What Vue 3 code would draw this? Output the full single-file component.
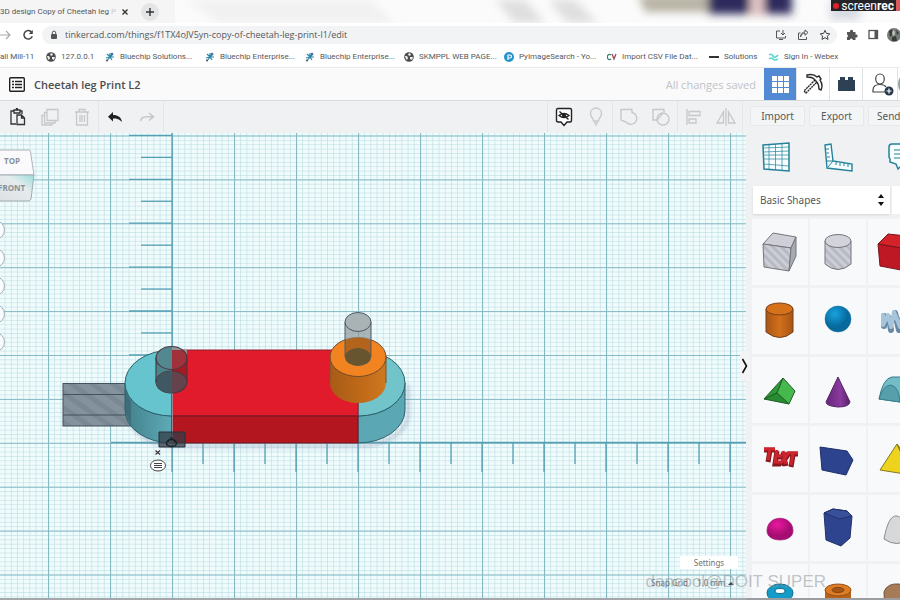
<script setup>
import { ref } from 'vue'

const address = ref('tinkercad.com/things/f1TX4oJV5yn-copy-of-cheetah-leg-print-l1/edit')

const bookmarks = [
  { label: '127.0.0.1', icon: 'globe', w: 32 },
  { label: 'Bluechip Solutions...', icon: 'chip', w: 73 },
  { label: 'Bluechip Enterprise...', icon: 'chip', w: 73 },
  { label: 'Bluechip Enterprise...', icon: 'chip', w: 72 },
  { label: 'SKMPPL WEB PAGE...', icon: 'globe', w: 73 },
  { label: 'PyImageSearch - Yo...', icon: 'py', w: 76 },
  { label: 'Import CSV File Dat...', icon: 'cv', w: 75 },
  { label: 'Solutions', icon: 'dash', w: 33 },
  { label: 'Sign In - Webex', icon: 'webex', w: 60 },
]

const shapes = [
  'holebox', 'holecyl', 'box', 'cylinder', 'sphere', 'scribble', 'roof', 'cone', 'round',
  'text', 'wedge', 'pyramid', 'half', 'prism', 'paraboloid', 'torus', 'tube', 'heart',
]

const views = ['Home view', 'Fit all', 'Zoom in', 'Zoom out', 'Flat view']

const vTicks = Array.from({ length: 15 }, (_, i) => ({ y: 442.7 - i * 21.95, x: i % 2 ? 141 : 129 }))
const hTicks = Array.from({ length: 19 }, (_, i) => ({ x: 172 + i * 31, y: i % 2 ? 331 : 339 }))
</script>

<template>
  <div class="app">
    <header class="browser">
      <div class="tabs">
        <svg class="backdrop" width="900" height="23" aria-hidden="true">
          <defs><filter id="soft"><feGaussianBlur stdDeviation="4" /></filter></defs>
          <rect width="900" height="23" fill="#fbfbfb" />
          <rect width="175" height="23" fill="#f5f5f5" />
          <g filter="url(#soft)">
            <path d="M185 0H370L395 23H220Z" fill="#f1f1f1" />
            <path d="M495 0H525L545 23H515Z M548 0H575L598 23H568Z" fill="#dfdfdf" />
            <path d="M638 -5H715V12H645Z" fill="#b8b3a4" />
            <path d="M708 -10H792V14H708Z" fill="#2e2b5d" />
            <path d="M750 -10H764V16H750Z" fill="#e2c6c6" />
            <path d="M830 0H860V20H830Z" fill="#d5dae2" />
          </g>
        </svg>
        <span class="tab-title">3D design Copy of Cheetah leg <i>P</i></span>
        <button class="plain close" aria-label="Close tab">
          <svg width="8" height="8"><path d="M1.5 1.5 6.5 6.5M6.5 1.5 1.5 6.5" stroke="#333" stroke-width="1.4" /></svg>
        </button>
        <button class="plain add" aria-label="New tab">
          <svg width="10" height="10"><path d="M5 1V9M1 5H9" stroke="#333" stroke-width="1.4" /></svg>
        </button>
        <div class="recorder"><span class="dot"></span><span>screen<b>rec</b></span><span class="bar"></span></div>
      </div>

      <div class="nav">
        <button class="plain" aria-label="Forward">
          <svg width="12" height="12"><path d="M0 6H10M6 2 10 6 6 10" fill="none" stroke="#aaa" stroke-width="1.2" /></svg>
        </button>
        <button class="plain reload" aria-label="Reload">
          <svg width="12" height="12"><path d="M9.7 3.2A4.3 4.3 0 1 0 10.3 7.3" fill="none" stroke="#444" stroke-width="1.5" /><path d="M10.8 1V5H6.8Z" fill="#444" /></svg>
        </button>
        <div class="omnibox">
          <svg width="8" height="10"><rect x="1" y="4" width="6" height="5" rx="1" fill="#555" /><path d="M2.3 4V2.8a1.7 1.7 0 0 1 3.4 0V4" fill="none" stroke="#555" /></svg>
          <input v-model="address" aria-label="Address" />
          <button class="plain" aria-label="Install app">
            <svg width="12" height="12" fill="none" stroke="#555"><path d="M5 2H1.5V9H10.5V7M4 10.5H8M8 1V6M6 4 8 6 10 4" /></svg>
          </button>
          <button class="plain" aria-label="Share">
            <svg width="12" height="12" fill="none" stroke="#555"><path d="M3.5 4H1.5V10.5H9.5V8M3.5 8C4 5 6 4.2 8 4.2V6.3L11 3.5 8 1V3C5.5 3.2 4 4.5 3.5 8Z" /></svg>
          </button>
          <button class="plain" aria-label="Bookmark">
            <svg width="12" height="12"><path d="M6 1.3 7.4 4.4 10.8 4.8 8.3 7.1 9 10.4 6 8.7 3 10.4 3.7 7.1 1.2 4.8 4.6 4.4Z" fill="none" stroke="#444" /></svg>
          </button>
        </div>
        <button class="plain ext" aria-label="Extensions">
          <svg width="12" height="12"><path d="M1 3H4A1.6 1.6 0 1 1 7 3H9.5V5.5A1.6 1.6 0 1 1 9.5 8.5V11H6.8A1.5 1.5 0 0 0 3.8 11H1V8.3A1.5 1.5 0 0 0 1 5.5Z" fill="#555" /></svg>
        </button>
        <button class="plain side" aria-label="Side panel">
          <svg width="11" height="11"><rect x="1" y="1.5" width="8.500" height="8" fill="none" stroke="#555" stroke-width="1.3" /><rect x="6.500" y="1.500" width="3" height="8" fill="#555" /></svg>
        </button>
        <button class="plain avatar" aria-label="Profile">
          <svg width="14" height="14"><circle cx="7" cy="7" r="7" fill="#777b76" /><path d="M2 3 5 1 6 6 3 9ZM9 2 12 5 10 7ZM5 9 9 8 10 13H5Z" fill="#363c39" /><path d="M6 2 8 4 7 8 5 6Z" fill="#c6c9be" /></svg>
        </button>
      </div>

      <nav class="bookmarks" aria-label="Bookmarks">
        <a href="#" class="first">all Mill-11</a>
        <a v-for="(b, i) in bookmarks" :key="i" href="#">
          <svg v-if="b.icon === 'globe'" width="10" height="10"><circle cx="5" cy="5" r="4.800" fill="#4c4c4c" /><path d="M1 4 3 4 4 6 3 8 2 7ZM5 1 7 2 6 4 4 3ZM6 5 9 5 8 8 6 7Z" fill="#eee" /></svg>
          <svg v-else-if="b.icon === 'chip'" width="10" height="10"><path d="M5 5 2 2M5 5 8 2M5 5 9 5M5 5 7 8M5 5 2 9M5 5 1 6M5 5 5 1" stroke="#2a86a5" stroke-width="1.200" /><circle cx="7" cy="2" r="1.300" fill="#496cb5" /><circle cx="2" cy="8.500" r="1" fill="#555" /></svg>
          <svg v-else-if="b.icon === 'py'" width="10" height="10"><circle cx="5" cy="5" r="5" fill="#2493c9" /><path d="M4 8V3H6A1.500 1.500 0 0 1 6 6H4" fill="none" stroke="#fff" stroke-width="1.200" /></svg>
          <svg v-else-if="b.icon === 'cv'" width="10" height="10"><path d="M4 3A2.200 2.600 0 1 0 4 7" fill="none" stroke="#39806b" stroke-width="1.300" /><path d="M5 2 7 7 9 2" fill="none" stroke="#a44358" stroke-width="1.300" /></svg>
          <svg v-else-if="b.icon === 'dash'" width="10" height="10"><path d="M0 5H10M1 4V6M5 4V6" stroke="#333" stroke-width="1.800" /></svg>
          <svg v-else width="10" height="10"><path d="M0 3Q2 1 4 4T9 3M0 7Q2 5 4 7T9 7" fill="none" stroke="#54d7cf" stroke-width="1.600" /></svg>
          <span :style="{ width: b.w + 'px' }">{{ b.label }}</span>
        </a>
      </nav>
    </header>

    <div class="titlebar">
      <button class="plain menu" aria-label="Designs">
        <svg width="16" height="15"><rect x=".7" y=".7" width="14.600" height="13.600" rx="1" fill="#fff" stroke="#222" stroke-width="1.400" /><path d="M3 4.500H5M3 7.500H5M3 10.500H5M6 4.500H13M6 7.500H13M6 10.500H13" stroke="#222" stroke-width="1.500" /></svg>
      </button>
      <h1>Cheetah leg Print L2</h1>
      <span class="saved">All changes saved</span>
      <div class="modes">
        <button class="on" aria-label="3D design"><svg width="18" height="18"><path d="M1 1H6V6H1ZM7 1H12V6H7ZM13 1H18V6H13ZM1 7H6V12H1ZM7 7H12V12H7ZM13 7H18V12H13ZM1 13H6V18H1ZM7 13H12V18H7ZM13 13H18V18H13Z" fill="#fff" /></svg></button>
        <button aria-label="Blocks"><svg width="22" height="22" fill="none" stroke="#2b2b2b" stroke-width="1.400"><path d="M13 7 2 18 4 20 15 9" stroke-dasharray="2 .6" /><path d="M5 2C9 1 13 2 15 4L17 3 19 6 18 7C20 10 21 13 19 17L17 16C17 12 16 10 14 8L12 6C10 4 8 4 5 4Z" /></svg></button>
        <button aria-label="Bricks"><svg width="19" height="16"><path d="M1 4H3V1H8V4H11V1H16V4H18V15H1Z" fill="#2d4054" /></svg></button>
        <button class="person" aria-label="Invite people"><svg width="23" height="24" fill="none" stroke="#444" stroke-width="1.200"><ellipse cx="9" cy="7" rx="4.300" ry="5" /><path d="M14 20H2V18C2 14 5 12.500 9 12.500 12 12.500 14 13.500 15 15" /><circle cx="18" cy="19" r="4.500" fill="#26394c" stroke="none" /><path d="M18 16.500V21.500M15.500 19H20.500" stroke="#fff" /></svg></button>
        <button class="user" aria-label="Account"><span></span></button>
      </div>
    </div>

    <div class="body">
      <main>
        <div class="toolbar">
          <div class="group">
            <button class="tool" aria-label="Paste"><svg width="18" height="18" fill="none" stroke="#333" stroke-width="1.300"><path d="M7 16H2V3H5M11 3H13V6M5 2H11V5H5ZM7.500 2V.7H9" /><path d="M8 7H12.500L15.500 10V16.500H8ZM12.500 7V10H15.500" fill="#f0f1f3" /></svg></button>
            <button class="tool off" aria-label="Duplicate"><svg width="18" height="18" fill="none" stroke="#c6c8cb" stroke-width="1.300"><path d="M6 1.500H17V12.500H6ZM6 4.500H3.500V15H14V12.500M3.500 7.500H1V17H11V15" /></svg></button>
            <button class="tool off" aria-label="Delete"><svg width="18" height="18" fill="none" stroke="#c6c8cb" stroke-width="1.300"><path d="M2 4H16M6 4V1.500H12V4M3.500 4.500V17H14.500V4.500M7 7V14M9 7V14M11.500 7V14" /></svg></button>
          </div>
          <div class="group">
            <button class="tool" aria-label="Undo"><svg width="16" height="12"><path d="M6 1V4C11 4 14 6 15 11 12 8 10 7.500 6 7.500V10.500L1 5.700Z" fill="#222" /></svg></button>
            <button class="tool off" aria-label="Redo"><svg width="16" height="12"><path d="M10 2 14.500 5.700 10 9.500M14 5.700H8C4 5.700 2 7 1.500 10" fill="none" stroke="#c6c8cb" stroke-width="1.600" /></svg></button>
          </div>
          <div class="group right">
            <button class="tool" aria-label="Show all"><svg width="18" height="20" fill="none" stroke="#222" stroke-width="1.400"><path d="M3 1.500H15Q16.500 1.500 16.500 3V13.500Q16.500 15 15 15H12L9 18.500 6 15H3Q1.500 15 1.500 13.500V3Q1.500 1.500 3 1.500Z" fill="#fff" /><path d="M4 8.500Q9 4.500 14 8.500 9 12.500 4 8.500Z" /><circle cx="9" cy="8.500" r="1.400" fill="#222" /><path d="M4.500 4.500 13.500 12.500" /></svg></button>
            <button class="tool off" aria-label="Light"><svg width="18" height="20" fill="none" stroke="#c6c8cb" stroke-width="1.300"><path d="M6.500 14C6.500 11 3.500 10 3.500 6.500A5.500 5.500 0 0 1 14.500 6.500C14.500 10 11.500 11 11.500 14ZM7 16H11M8 18H10" /></svg></button>
          </div>
          <div class="group">
            <button class="tool off" aria-label="Group"><svg width="20" height="18" fill="none" stroke="#c6c8cb" stroke-width="1.400"><path d="M2 1.500H13V4.500A6 6 0 1 1 7 14L2 12Z" /></svg></button>
            <button class="tool off" aria-label="Ungroup"><svg width="20" height="18" fill="none" stroke="#c6c8cb" stroke-width="1.400"><path d="M6 12H2V1.500H13V4" /><circle cx="12" cy="11" r="6" /><path d="M6 12 12 5" /></svg></button>
          </div>
          <div class="group">
            <button class="tool off" aria-label="Align"><svg width="18" height="18" fill="none" stroke="#c6c8cb" stroke-width="1.300"><path d="M2 1V17M4 3.500H15V7.500H4ZM4 11H11V15H4Z" /></svg></button>
            <button class="tool off" aria-label="Mirror"><svg width="20" height="18" fill="none" stroke="#c6c8cb" stroke-width="1.300"><path d="M10 0V18M7.500 4V15H1ZM12.500 4V15H19Z" /></svg></button>
          </div>
        </div>

        <div class="stage">
          <svg class="scene" role="img" aria-label="Cheetah leg model on the workplane">
            <defs>
              <pattern id="minor" x="48" y="2.500" width="6.200" height="4.390" patternUnits="userSpaceOnUse">
                <path d="M0 0H6.200M0 0V4.390" fill="none" stroke="#b0d6df" stroke-width="1" />
              </pattern>
              <pattern id="major" x="48" y="2.500" width="62" height="43.900" patternUnits="userSpaceOnUse">
                <path d="M.5 0V43.900M0 .5H62" fill="none" stroke="#86b9c4" stroke-width="1.200" />
              </pattern>
              <pattern id="stripe" width="12" height="12" patternUnits="userSpaceOnUse" patternTransform="rotate(-55)">
                <rect width="12" height="12" fill="#84929d" /><rect width="5" height="12" fill="#7a8894" />
              </pattern>
              <linearGradient id="tealSide"><stop stop-color="#42808c" /><stop offset="1" stop-color="#5eabb7" /></linearGradient>
              <linearGradient id="orangeSide"><stop stop-color="#a85b17" /><stop offset=".5" stop-color="#bd6818" /><stop offset="1" stop-color="#d07820" /></linearGradient>
              <filter id="shade"><feGaussianBlur stdDeviation="2" /></filter>
            </defs>
            <rect width="100%" height="100%" fill="#f0fbfc" />
            <rect width="100%" height="100%" fill="url(#minor)" />
            <rect width="100%" height="100%" fill="url(#major)" />
            <g stroke="#55a0b5" stroke-width="1.300">
              <path d="M172 0V309M111 309.500H3000" />
              <path v-for="(t, i) in vTicks" :key="'v' + i" :d="`M${t.x} ${t.y - 133}H172`" />
              <path v-for="(t, i) in hTicks" :key="'h' + i" :d="`M${t.x} 309V${t.y}`" />
            </g>
            <g transform="translate(0 -133)">
              <path d="M130 420A47 33 0 0 0 172 446H360A48 33 0 0 0 408 410V385" fill="none" stroke="#7d91af" stroke-width="3" opacity=".5" filter="url(#shade)" />
              <g stroke="#43515c">
                <rect x="63" y="383.500" width="68" height="42.500" fill="url(#stripe)" />
                <path d="M63 394.500H130M63 415H130" />
              </g>
              <path d="M125 383A47 33 0 0 0 172 416V443A47 33 0 0 1 125 410Z" fill="url(#tealSide)" stroke="#2c626d" />
              <path d="M172 350A47 33 0 0 0 172 416Z" fill="#66c4cf" stroke="#2c626d" />
              <path d="M125 410V388A47 33 0 0 0 131 401V426Z" fill="#395f6d" opacity=".6" />
              <path d="M405 383A47 33 0 0 1 358 416V443A47 33 0 0 0 405 410Z" fill="#5ba8b4" stroke="#2c626d" />
              <path d="M358 350A47 33 0 0 1 358 416Z" fill="#72c4cb" stroke="#2c626d" />
              <path d="M172 350H358V416H172Z" fill="#e21b2c" stroke="#8e2030" />
              <path d="M172 416H358V443H172Z" fill="#b3161f" stroke="#701722" />
              <path d="M172.500 350V443" stroke="#a38390" />
              <g stroke="#4c3842" stroke-width="1.200">
                <path d="M156 358A15.500 11.500 0 0 1 172 346.500V393.500A15.500 11.500 0 0 1 156 382Z" fill="#4a858e" stroke="none" />
                <path d="M172 350H187V382A15.500 11.500 0 0 1 172 393Z" fill="#aa1922" stroke="none" />
                <path d="M172 346.500A15.500 11.500 0 0 1 187 355V350H172Z" fill="#90969d" stroke="none" />
                <ellipse cx="171.500" cy="382" rx="15.500" ry="11" fill="#65434c" />
                <path d="M156 382A15.500 11 0 0 1 172 371V393A15.500 11 0 0 1 156 382" fill="#405861" stroke="none" />
                <path d="M156 358V382M187 358V382" />
                <ellipse cx="171.500" cy="358" rx="15.500" ry="11.500" fill="#7c98a2" fill-opacity=".2" />
              </g>
              <path d="M330 357V383A28 20 0 0 0 386 383V357Z" fill="url(#orangeSide)" />
              <path d="M386 357V383M330 357V381" stroke="#79542e" />
              <ellipse cx="358" cy="357" rx="28" ry="19.500" fill="#f18420" stroke="#714c2c" />
              <path d="M345 322V357A13 9 0 0 0 371 357V322Z" fill="#8f989b" fill-opacity=".7" />
              <path d="M345 340Q358 335 371 340V357H345Z" fill="#b2641c" />
              <ellipse cx="358" cy="357" rx="13" ry="9" fill="#675530" />
              <path d="M345 322V357M371 322V357" stroke="#4f5b64" />
              <ellipse cx="358" cy="322" rx="13" ry="9.500" fill="#a9b2b5" stroke="#4d5962" />
              <path d="M159 432H185V447H159Z" fill="#343c45" fill-opacity=".75" stroke="#27333a" />
              <ellipse cx="171.500" cy="443" rx="5" ry="3.500" fill="none" stroke="#182228" stroke-width="1.500" />
              <path d="M168 442 171.500 437 175 442" fill="none" stroke="#182228" />
              <path d="M155.500 450.500 160 454.500M160 450.500 155.500 454.500" stroke="#333" stroke-width="1.200" />
              <ellipse cx="158" cy="465.500" rx="7.500" ry="5.500" fill="#fff" stroke="#444" />
              <path d="M154 463.500H162M154 465.500H162M154 467.500H162" stroke="#444" />
            </g>
          </svg>

          <svg class="cube" width="36" height="56" role="img" aria-label="View cube: top, front">
            <defs><linearGradient id="face" x1="0" x2="1" y1="1" y2="0"><stop stop-color="#dcdfe1" /><stop offset=".6" stop-color="#e6eced" /><stop offset="1" stop-color="#9bdcdd" /></linearGradient></defs>
            <path d="M-1 2H29Q30 2 30.500 4L34 27H-1Z" fill="#fafafc" stroke="#afb4b9" />
            <path d="M-1 27H34L31 51Q30 53 28 53H-1Z" fill="url(#face)" stroke="#a1adb3" />
            <text x="4" y="16" font-size="8" font-weight="700">TOP</text>
            <text x="-2" y="43" font-size="8" font-weight="700">FRONT</text>
          </svg>

          <div class="views">
            <button v-for="v in views" :key="v" :aria-label="v"></button>
          </div>
          <div class="snap">
            <button class="settings">Settings</button>
            <label>Snap Grid
              <select><option>1.0 mm</option></select>
              <svg width="6" height="5"><path d="M0 4 3 1 6 4Z" fill="#444" /></svg>
            </label>
          </div>
        </div>
      </main>

      <button class="fold" aria-label="Collapse panel"><svg width="8" height="16"><path d="M1.500 1 5.500 8 1.500 15" fill="none" stroke="#111" stroke-width="1.600" /></svg></button>

      <aside>
        <div class="actions"><button>Import</button><button>Export</button><button>Send To</button></div>
        <div class="helpers">
          <button class="plain" aria-label="Workplane"><svg width="28" height="30" fill="none" stroke="#258199"><path d="M1 3 27 1V29L2 27Z" stroke-width="1.500" fill="#f5fdff" /><path d="M1 10 27 9M1 17 27 17M2 22 27 24M7 2V27M13.500 2V28M20 1V28M1 6 27 5M1 13 27 13" stroke-opacity=".7" /></svg></button>
          <button class="plain" aria-label="Ruler"><svg width="30" height="30" fill="none" stroke="#258199" stroke-width="1.400"><path d="M2 3 8 2 10 19 29 22V29L4 26Z" fill="#f5fdff" /><path d="M3 7H6M3.500 11H6M4 15H7M4 19H10L5 25M13 20V23M17 21V24M21 21V24M25 22V25" stroke-width="1" /></svg></button>
          <button class="plain" aria-label="Notes"><svg width="26" height="30" fill="none" stroke="#258199" stroke-width="1.500"><path d="M5 2H25V23H15L11 27 9 22 3 20V17L2 15V5Q2 2 5 2Z" fill="#f5fdff" /><path d="M7 8H25M7 12H25M7 16H25" stroke-width="1.200" /></svg></button>
        </div>
        <div class="picker">
          <select aria-label="Shape library"><option>Basic Shapes</option></select>
          <svg width="8" height="12"><path d="M1 4 4 0 7 4ZM1 8H7L4 12Z" fill="#111" /></svg>
          <button aria-label="Search shapes"></button>
        </div>
        <div class="grid">
          <button v-for="s in shapes" :key="s" class="card" :aria-label="s">
            <svg width="44" height="44" viewBox="0 0 44 44">
              <defs>
                <pattern id="hole" width="6" height="6" patternUnits="userSpaceOnUse" patternTransform="rotate(-45)"><rect width="6" height="6" fill="#b7bac3" /><rect width="3" height="6" fill="#cccdd6" /></pattern>
                <radialGradient id="blue" cx=".38" cy=".3"><stop stop-color="#18a2df" /><stop offset="1" stop-color="#07699c" /></radialGradient>
                <radialGradient id="pink" cx=".4" cy=".3"><stop stop-color="#eb179f" /><stop offset="1" stop-color="#a60d72" /></radialGradient>
                <linearGradient id="violet"><stop stop-color="#65277a" /><stop offset=".6" stop-color="#893a9e" /><stop offset="1" stop-color="#592169" /></linearGradient>
                <linearGradient id="amber"><stop stop-color="#a85516" /><stop offset=".5" stop-color="#d2701b" /><stop offset="1" stop-color="#a85516" /></linearGradient>
              </defs>
              <g v-if="s === 'holebox'" stroke="#74767d" stroke-linejoin="round"><path d="M5 14 15 3 38 7 33 18Z" fill="#cfd0d7" /><path d="M5 14 33 18 31 41 6 37Z" fill="url(#hole)" /><path d="M33 18 38 7 38 26 31 41Z" fill="#a7aab3" /></g>
              <g v-else-if="s === 'holecyl'" stroke="#74767d"><path d="M9 11V34Q22 45 35 34V11Z" fill="url(#hole)" /><ellipse cx="22" cy="11" rx="13" ry="6.500" fill="#d2d3db" /></g>
              <g v-else-if="s === 'box'" stroke="#79151c"><path d="M4 14 14 4 42 7 32 19Z" fill="#d4222b" /><path d="M4 14 32 19V41L6 36Z" fill="#be1824" /><path d="M32 19 42 7V30L32 41Z" fill="#8e141d" /></g>
              <g v-else-if="s === 'cylinder'" stroke="#764019"><path d="M8 10V33Q22 44 35 33V10Z" fill="url(#amber)" /><ellipse cx="21.500" cy="10" rx="13.500" ry="6" fill="#d6711b" /></g>
              <circle v-else-if="s === 'sphere'" cx="22" cy="20" r="13" fill="url(#blue)" stroke="#0c709d" stroke-width=".5" />
              <g v-else-if="s === 'scribble'" fill="none" stroke-linecap="round" stroke-linejoin="round"><path d="M10 17V27M15 19 17 31M21 14 25 31M28 20 33 31M36 18V28" stroke="#6787a2" stroke-width="6" /><path d="M9 16V26L14 16 17 28 20 13 26 28 28 18 34 28 36 16" stroke="#a7c5da" stroke-width="4" /></g>
              <g v-else-if="s === 'roof'" stroke="#205d28" stroke-linejoin="round"><path d="M6 31 25 10 19 25Z" fill="#2e9a37" /><path d="M25 10 37 23 31 36 19 25Z" fill="#46b94c" /><path d="M6 31 19 25 31 36Z" fill="#278b31" /></g>
              <path v-else-if="s === 'cone'" d="M22 9 34 34Q33 39 22 39 10 38 10 34Z" fill="url(#violet)" stroke="#552465" />
              <g v-else-if="s === 'round'" stroke="#397f8c"><path d="M5 31Q9 10 18 9H37Q43 15 42 32L26 34Z" fill="#75bdc6" /><path d="M5 31Q9 17 17 17 25 19 26 34Z" fill="#57a0ab" /></g>
              <g v-else-if="s === 'text'" fill="none" stroke="#871820" stroke-width="5"><path d="M6 13H17M12 13 10 25M19 14 17 27H23M19 20H24M25 15 28 29M31 16 23 28M30 17H40M35 18 33 30" /><path d="M6 12H17M12 12 10 23M19 13 17 25H23M19 19H24M25 14 28 27M31 15 23 26M30 16H40M35 17 33 28" stroke="#cf242d" stroke-width="3" /></g>
              <path v-else-if="s === 'wedge'" d="M4 10 31 14 37 23 30 38 6 33Z" fill="#2d438d" stroke="#1e3069" />
              <g v-else-if="s === 'pyramid'" stroke="#87781c"><path d="M23 7 6 33 37 38Z" fill="#edd31e" /><path d="M23 7 37 38 41 32Z" fill="#b7a218" /></g>
              <path v-else-if="s === 'half'" d="M9 25C9 8 35 8 35 25 35 37 9 37 9 25Z" fill="url(#pink)" stroke="#9f1672" stroke-width=".7" />
              <g v-else-if="s === 'prism'" stroke="#203267"><path d="M8 7 17 3 31 5 36 10 34 32 25 40 10 34Z" fill="#2e448f" /><path d="M8 7 17 3 31 5 36 10 23 13Z" fill="#384f9b" /></g>
              <path v-else-if="s === 'paraboloid'" d="M10 33C13 17 17 10 22 10S32 16 35 33Q23 42 10 33Z" fill="#d7d8d9" stroke="#898a8b" />
              <g v-else-if="s === 'torus'"><ellipse cx="22" cy="18" rx="13" ry="9" fill="#159bc7" stroke="#116d8d" /><ellipse cx="22" cy="16" rx="5" ry="2.500" fill="#fff" stroke="#116d8d" /></g>
              <g v-else-if="s === 'tube'"><path d="M9 15V26H35V15" fill="#b76219" /><ellipse cx="22" cy="15" rx="13" ry="6" fill="#dd7c24" stroke="#985017" /><ellipse cx="22" cy="15" rx="6" ry="2.500" fill="#a55718" stroke="#81430f" /></g>
              <path v-else d="M10 17Q13 8 25 9L39 15V37H11Z" fill="#a77b55" stroke="#715039" />
            </svg>
          </button>
        </div>
      </aside>
    </div>
    <div class="watermark">dancool@DOIT SUPER</div>
  </div>
</template>

<style>
body { overflow: hidden; background: #fff; }
</style>

<style scoped>
.app { position: relative; display: flex; flex-direction: column; height: 100vh; overflow: hidden; font-family: "Open Sans", sans-serif; color: #55585c; }
button, input, select { font: inherit; color: inherit; margin: 0; padding: 0; border: 0; background: none; box-sizing: border-box; }
svg { display: block; flex: none; }
.plain { display: flex; align-items: center; justify-content: center; flex: none; }
.browser { flex: none; background: #fff; }
.tabs { position: relative; display: flex; align-items: center; height: 23px; overflow: hidden; }
.backdrop { position: absolute; inset: 0; width: 100%; }
.tab-title { position: relative; width: 121px; white-space: nowrap; font: 8px Roboto, sans-serif; }
.tab-title i { font-style: normal; color: #ccc; }
.close, .add { position: relative; }
.add { width: 18px; height: 18px; margin-left: 12px; border-radius: 50%; background: #e4e5e7; }
.recorder { position: absolute; top: 0; right: 0; display: flex; align-items: center; gap: 2px; height: 11px; padding-left: 2px; background: #242428; color: #fff; font: 12px/10px Roboto, sans-serif; }
.dot { width: 6px; height: 6px; border-radius: 50%; background: #e2202c; }
.bar { width: 4px; height: 11px; background: #d95b5e; }
.nav { display: flex; align-items: center; height: 23px; background: #fff; }
.reload { margin-left: 10px; }
.omnibox { flex: 1; display: flex; align-items: center; gap: 10px; height: 18px; margin-left: 8px; padding: 0 6px 0 8px; border-radius: 9px; background: #f1f3f4; }
.omnibox input { flex: 1; min-width: 0; margin-left: -3px; font: 9px "Open Sans", sans-serif; outline: 0; }
.ext { margin-left: 9px; }
.side { margin-left: 10px; }
.avatar { margin: 0 -1px 0 8px; }
.bookmarks { display: flex; align-items: center; gap: 12px; height: 21px; border-bottom: 1px solid #e8e9ea; overflow: hidden; font: 8px Roboto, sans-serif; }
.bookmarks a { display: flex; align-items: center; gap: 5px; color: inherit; text-decoration: none; white-space: nowrap; }
.bookmarks .first { width: 34px; }
.titlebar { flex: none; display: flex; align-items: center; height: 32px; background: #fafafb; border-bottom: 1px solid #d8dadc; overflow: hidden; }
.menu { margin-left: 9px; }
h1 { flex: 1; margin: 0 0 0 9px; font: 600 11px "Open Sans", sans-serif; color: #4a4d51; white-space: nowrap; }
.saved { margin-right: 8px; font: 11px "Open Sans", sans-serif; color: #bfc3c8; }
.modes { display: flex; align-self: stretch; width: 136px; overflow: hidden; }
.modes button { flex: 0 0 33px; display: flex; align-items: center; justify-content: center; border-right: 1px solid #e0e2e4; background: #fff; }
.modes .on { background: #528bd4; }
.modes .person { flex-basis: 35px; padding-left: 4px; }
.user span { flex: none; width: 24px; height: 24px; border-radius: 50%; background: #8fa29b; }
.modes .user { justify-content: flex-start; }
.body { position: relative; flex: 1; display: flex; min-height: 0; }
main { flex: 1; min-width: 0; display: flex; flex-direction: column; }
.toolbar { flex: none; display: flex; height: 32px; padding: 0 3px 0 2px; background: #f0f1f3; }
.group { display: flex; border-right: 1px solid #e5e6e9; }
.tool { width: 32px; display: flex; align-items: center; justify-content: center; }
.group.right { margin-left: auto; border-left: 1px solid #e5e6e9; }
.stage { position: relative; flex: 1; min-height: 0; border-bottom: 2px solid #a5a8aa; overflow: hidden; }
.scene { width: 100%; height: 100%; }
.cube { position: absolute; left: 0; top: 15px; font-family: "Open Sans", sans-serif; fill: #899097; }
.views { position: absolute; left: -15px; top: 87px; display: flex; flex-direction: column; gap: 8px; }
.views button { width: 20px; height: 20px; border: 1px solid #a6adb7; border-radius: 50%; background: #f7fcfd; }
.fold { position: absolute; z-index: 1; right: 150px; top: 250px; width: 10px; height: 30px; display: flex; align-items: center; justify-content: center; background: #f3f4f6; }
.snap { position: absolute; right: 8px; bottom: 9px; display: flex; flex-direction: column; align-items: flex-end; gap: 8px; font: 8px/12px "Noto Sans", sans-serif; color: #6d7377; }
.settings { width: 58px; height: 13px; background: #fff; }
.snap label { display: flex; align-items: center; gap: 9px; margin-right: 4px; }
.snap select { appearance: none; width: 30px; }
.snap svg { margin-left: -8px; }
aside { position: relative; flex: 0 0 154px; min-width: 0; overflow: hidden; background: #f0f1f3; border-bottom: 2px solid #9b9da0; box-sizing: border-box; }
.actions { display: flex; gap: 4px; padding: 5px 0 0 4px; font: 10px "Noto Sans", sans-serif; }
.actions button { flex: 0 0 55px; height: 20px; border: 1px solid #e7e8ea; border-radius: 2px; background: #f4f5f6; }
.helpers { display: flex; gap: 32px; padding: 16px 0 0 15px; }
.helpers button { width: 30px; height: 30px; }
.picker { position: relative; display: flex; align-items: center; gap: 2px; margin: 14px 0 0 7px; }
.picker select { appearance: none; flex: 0 0 137px; height: 28px; padding-left: 7px; background: #fff; box-shadow: 0 1px 2px #d5d7da; font: 10px "Noto Sans", sans-serif; }
.picker svg { position: absolute; left: 124px; }
.picker button { flex: 0 0 60px; height: 28px; background: #fff; }
.grid { display: grid; grid-template-columns: repeat(3, 56px); grid-auto-rows: 66px; gap: 3px 2px; padding: 5px 0 0 6px; }
.card { display: flex; align-items: center; justify-content: center; background: #f8f9fa; }
.watermark { position: absolute; right: 74px; bottom: 8px; pointer-events: none; font: 17px/20px "Liberation Sans", sans-serif; color: #898d9180; }
</style>
